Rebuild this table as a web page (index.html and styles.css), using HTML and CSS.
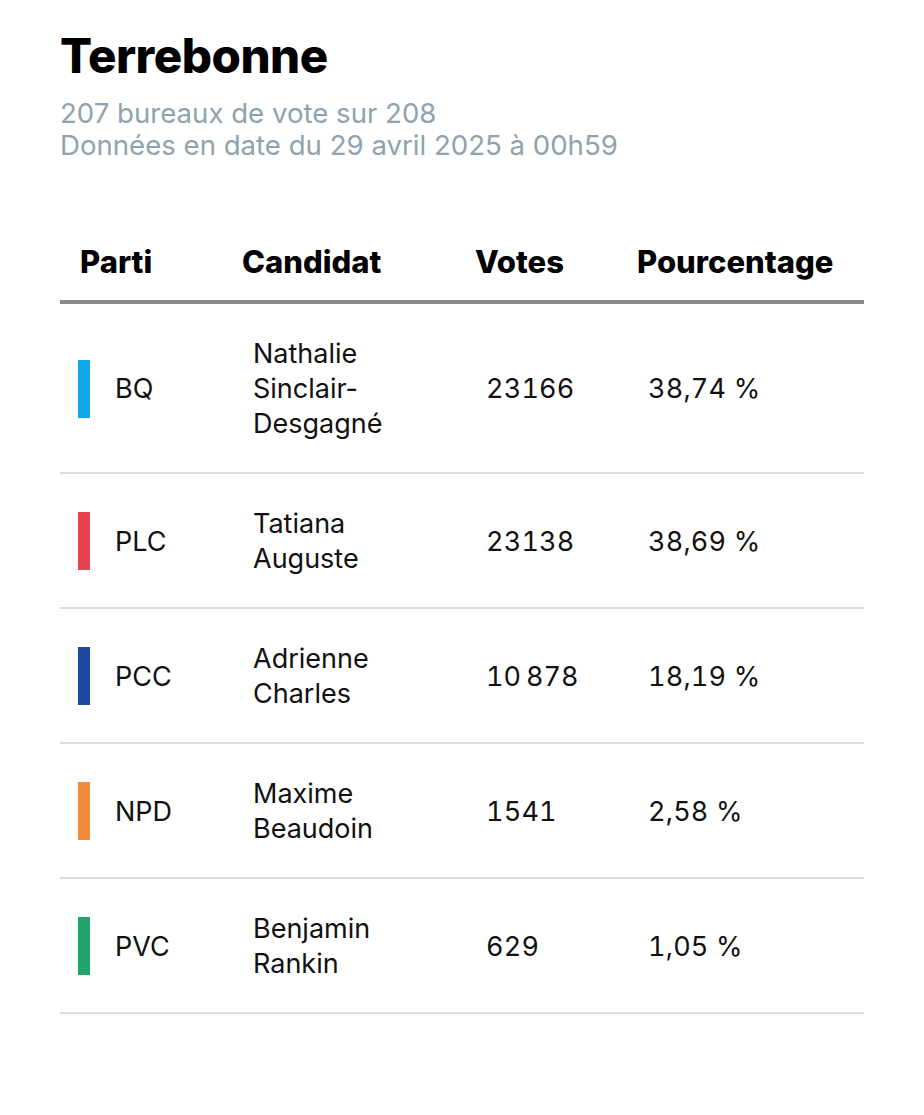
FILE: index.html
```html
<!DOCTYPE html>
<html lang="fr">
<head>
<meta charset="utf-8">
<title>Terrebonne</title>
<link rel="stylesheet" href="styles.css">
</head>
<body>
<main class="page">
  <h1 class="title">Terrebonne</h1>
  <p class="meta">207 bureaux de vote sur 208<br>Données en date du 29 avril 2025 à 00h59</p>
  <div class="results">
    <div class="row head">
      <div class="cell">Parti</div>
      <div class="cell">Candidat</div>
      <div class="cell">Votes</div>
      <div class="cell">Pourcentage</div>
    </div>
    <div class="row">
      <div class="cell party"><span class="bar bq"></span>BQ</div>
      <div class="cell">Nathalie<br>Sinclair-<br>Desgagné</div>
      <div class="cell num">23166</div>
      <div class="cell num">38,74&nbsp;%</div>
    </div>
    <div class="row">
      <div class="cell party"><span class="bar plc"></span>PLC</div>
      <div class="cell">Tatiana<br>Auguste</div>
      <div class="cell num">23138</div>
      <div class="cell num">38,69&nbsp;%</div>
    </div>
    <div class="row">
      <div class="cell party"><span class="bar pcc"></span>PCC</div>
      <div class="cell">Adrienne<br>Charles</div>
      <div class="cell num">10&#8239;878</div>
      <div class="cell num">18,19&nbsp;%</div>
    </div>
    <div class="row">
      <div class="cell party"><span class="bar npd"></span>NPD</div>
      <div class="cell">Maxime<br>Beaudoin</div>
      <div class="cell num">1541</div>
      <div class="cell num">2,58&nbsp;%</div>
    </div>
    <div class="row">
      <div class="cell party"><span class="bar pvc"></span>PVC</div>
      <div class="cell">Benjamin<br>Rankin</div>
      <div class="cell num">629</div>
      <div class="cell num">1,05&nbsp;%</div>
    </div>
  </div>
</main>
</body>
</html>
```
FILE: styles.css
```css
html, body {
  margin: 0;
  padding: 0;
  background: #ffffff;
}
.page {
  padding: 26px 60px 0 60px;
  font-family: "Inter", "Roboto", sans-serif;
  color: #111111;
}
.title {
  margin: 0;
  font-size: 47.5px;
  line-height: 60px;
  font-weight: 800;
  letter-spacing: -0.5px;
  color: #000000;
}
.meta {
  margin: 11px 0 0 0;
  font-size: 27.6px;
  line-height: 32px;
  font-weight: 400;
  color: #8fa2ae;
}
.results {
  margin-top: 83px;
  width: 804px;
}
.row {
  display: grid;
  grid-template-columns: 162px 233px 162px 247px;
  align-items: center;
  border-bottom: 2px solid #dddddd;
  padding: 32px 0 31px 0;
  font-size: 27px;
  line-height: 35px;
}
.row .cell {
  padding-left: 31px;
}
.row .cell.num {
  font-variant-numeric: tabular-nums;
  letter-spacing: 0.2px;
}
.row .cell.party {
  display: flex;
  align-items: center;
  padding-left: 18px;
}
.bar {
  display: block;
  width: 12px;
  height: 58px;
  margin-right: 25px;
}
.bar.bq { background: #12a6ea; }
.bar.plc { background: #e8414f; }
.bar.pcc { background: #1c48a2; }
.bar.npd { background: #f38a38; }
.bar.pvc { background: #22a568; }
.row.head {
  padding: 0 0 20px 0;
  border-bottom: 4px solid #8a8a8a;
  font-size: 31px;
  line-height: 36px;
  font-weight: 800;
  letter-spacing: 0;
  color: #000000;
}
.row.head .cell {
  padding-left: 20px;
}
```
